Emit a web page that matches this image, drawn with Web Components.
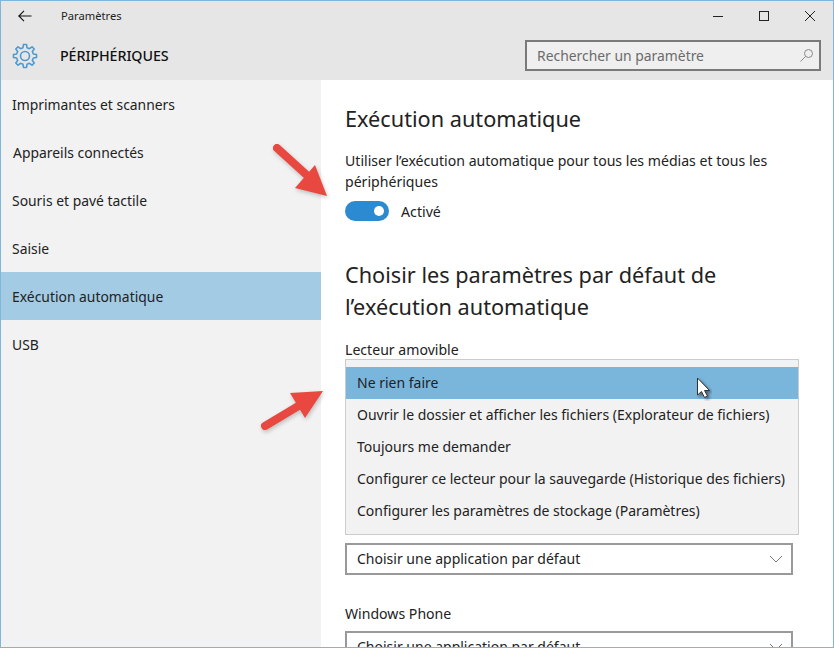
<!DOCTYPE html>
<html lang="fr"><head><meta charset="utf-8"><title>Paramètres</title>
<style>
html,body{margin:0;padding:0;background:#fff}
body{font-family:"Noto Sans","Open Sans","Liberation Sans",sans-serif;color:#1a1a1a}
</style></head><body>
<settings-window>
  <settings-header slot="header"></settings-header>
  <side-nav slot="nav">
    <nav-item>Imprimantes et scanners</nav-item>
    <nav-item style="--shift:1px">Appareils connectés</nav-item>
    <nav-item>Souris et pavé tactile</nav-item>
    <nav-item>Saisie</nav-item>
    <nav-item selected>Exécution automatique</nav-item>
    <nav-item>USB</nav-item>
  </side-nav>
  <autoplay-page slot="main"></autoplay-page>
  <red-arrow style="left:269px;top:139px" shaft="M7 8 40 38" head="M57 56 25 48 45 25Z"></red-arrow>
  <red-arrow style="left:259px;top:384px" shaft="M5 41 40 20" head="M63 6 30 8 45 33Z"></red-arrow>
</settings-window>
<script>
function def(name, html, init){
  customElements.define(name, class extends HTMLElement{
    constructor(){super();this.attachShadow({mode:'open'}).innerHTML=html;}
    connectedCallback(){ if(init) init.call(this); }
  });
}
function gearPath(cx,cy,ro,ri,n){
  let d='';
  const p=(r,a)=>(cx+r*Math.sin(a)).toFixed(2)+' '+(cy-r*Math.cos(a)).toFixed(2);
  const step=2*Math.PI/n;
  for(let i=0;i<n;i++){
    const a=i*step;
    d+=(i?'L':'M')+p(ri,a-step*.30)+'L'+p(ro,a-step*.17)+'L'+p(ro,a+step*.17)+'L'+p(ri,a+step*.30);
  }
  return d+'Z';
}
def('settings-window',`<style>
:host{display:grid;grid-template-columns:320px 1fr;grid-template-rows:79px 1fr;width:834px;height:648px;box-sizing:border-box;border:1px solid #7fb6dc;overflow:hidden;background:#fff;position:relative}
.h{grid-column:1/3;display:block}
</style><slot name="header" class="h"></slot><slot name="nav"></slot><slot name="main"></slot><slot></slot>`);

def('settings-header',`<style>
:host{display:block;grid-column:1/3;background:#e6e6e6;height:79px;color:#000}
.top{display:flex;align-items:center;height:30px}
.back{width:14px;height:12px;margin-left:17px;flex:none}
.app{margin-left:29px;font-size:11.2px;color:#222;flex:1;padding-bottom:2px}
.wb{display:flex;align-items:center;margin-right:0}
.wb span{display:flex;width:46px;justify-content:center;align-items:center;height:30px}
.row{display:flex;align-items:center;height:49px}
.gear{width:26px;height:26px;margin-left:11px;flex:none}
.title{margin-left:22px;font-size:14.3px;font-weight:500;color:#111;flex:1;letter-spacing:-.1px}
.search{width:277px;height:27px;border:2px solid #7a7a7a;background:#efefef;margin-right:12px;display:flex;align-items:center;justify-content:space-between;padding:0 5px 0 10px;font-size:13.9px;color:#6b6b6b}
</style>
<div class="top">
 <svg class="back" viewBox="0 0 14 12" fill="none" stroke="#111" stroke-width="1.100"><path d="M.8 6H13.500M6 .8.8 6 6 11.200"/></svg>
 <span class="app">Paramètres</span>
 <div class="wb">
  <span><svg width="12" height="12" fill="none" stroke="#222"><path d="M1 6.500H11"/></svg></span>
  <span><svg width="12" height="12" fill="none" stroke="#222"><rect x="1.500" y="1.500" width="9" height="9"/></svg></span>
  <span><svg width="12" height="12" fill="none" stroke="#222"><path d="M1 1l10 10M11 1 1 11"/></svg></span>
 </div>
</div>
<div class="row">
 <svg class="gear" viewBox="0 0 26 26" fill="none" stroke="#4d9ad0" stroke-width="1.600" stroke-linejoin="round">
  <path d="${gearPath(13,13,11.6,8.6,8)}"/>
  <circle cx="13" cy="13" r="4.500"/>
 </svg>
 <span class="title">PÉRIPHÉRIQUES</span>
 <div class="search"><span>Rechercher un paramètre</span>
  <svg width="15" height="15" viewBox="0 0 15 15" fill="none" stroke="#8a8a8a"><circle cx="9.500" cy="5.500" r="4"/><path d="M6.500 8.500 1.500 13.500"/></svg></div>
</div>`);

def('side-nav',`<style>:host{display:block;background:#f2f2f2;padding:0}</style><slot></slot>`);
def('nav-item',`<style>
:host{display:flex;align-items:center;height:48px;padding-left:calc(11px + var(--shift,0px));font-size:13.9px;color:#222}
:host([selected]){background:#a3cce4}
</style><slot></slot>`);

def('toggle-switch',`<style>
:host{display:flex;align-items:center;gap:12px;font-size:14.2px;color:#222}
.t{width:44px;height:20px;border-radius:10px;background:#2b8ad0;position:relative;flex:none}
.t i{position:absolute;right:5px;top:5px;width:10px;height:10px;border-radius:50%;background:#fff}
</style><span class="t"><i></i></span><slot></slot>`);

def('combo-box',`<style>
:host{display:flex;align-items:center;justify-content:space-between;box-sizing:border-box;width:448px;height:32px;border:2px solid #999;background:#fff;padding:0 8px 2px 10px;font-size:14px;color:#222;flex:none}
svg{margin-top:2px}
</style><slot></slot><svg width="14" height="8" fill="none" stroke="#777"><path d="M1 1l6 6 6-6"/></svg>`);

def('drop-list',`<style>
:host{display:block;box-sizing:border-box;width:454px;height:176px;border:1px solid #ccc;background:#f2f2f2;padding:7px 0;flex:none}
</style><slot></slot>`);
def('drop-option',`<style>
:host{display:flex;align-items:center;box-sizing:border-box;height:32px;padding:0 0 2px 11px;font-size:14px;color:#222;white-space:nowrap}
:host([selected]){background:#7ab5dc}
</style><slot></slot>`);

def('autoplay-page',`<style>
:host{display:flex;flex-direction:column;align-items:flex-start;padding:0 0 0 24px;color:#222;height:568px;overflow:hidden;position:relative;font-size:14.1px}
h2{font-weight:400;margin:0;font-size:21.7px;color:#222;line-height:32px}
.h1{margin-top:23px}
.desc{margin:16px 0 0;line-height:20.5px;width:450px}
toggle-switch{margin-top:9px}
.h2{margin-top:38px;width:450px}
.lab{margin-top:18px;line-height:18px}
combo-box{margin-top:8px}
.lab2{margin-top:30px}
.cur{position:absolute;left:375px;top:297px}
</style>
<h2 class="h1">Exécution automatique</h2>
<p class="desc">Utiliser l’exécution automatique pour tous les médias et tous les périphériques</p>
<toggle-switch>Activé</toggle-switch>
<h2 class="h2">Choisir les paramètres par défaut de l’exécution automatique</h2>
<div class="lab">Lecteur amovible</div>
<drop-list>
 <drop-option selected>Ne rien faire</drop-option>
 <drop-option>Ouvrir le dossier et afficher les fichiers (Explorateur de fichiers)</drop-option>
 <drop-option>Toujours me demander</drop-option>
 <drop-option>Configurer ce lecteur pour la sauvegarde (Historique des fichiers)</drop-option>
 <drop-option>Configurer les paramètres de stockage (Paramètres)</drop-option>
</drop-list>
<combo-box>Choisir une application par défaut</combo-box>
<div class="lab lab2">Windows Phone</div>
<combo-box>Choisir une application par défaut</combo-box>
<svg class="cur" width="16" height="24" viewBox="0 0 16 24"><path d="M1.500 1v17l4-3.500 3 6 3-1.500-3-5.500h5z" fill="#fff" stroke="#333" stroke-width="1" style="filter:drop-shadow(2px 2px 1.500px rgba(0,0,0,.45))"/></svg>
`);

def('red-arrow',`<style>:host{display:block;position:absolute;pointer-events:none;z-index:3}
svg{display:block;overflow:visible;filter:drop-shadow(1px 2px 2px rgba(0,0,0,.22))}</style>
<svg width="70" height="60"><path class="s" stroke="#e8483f" stroke-width="8" stroke-linecap="round" fill="none"/><path class="h" fill="#e8483f"/></svg>`,
function(){
  this.shadowRoot.querySelector('.s').setAttribute('d',this.getAttribute('shaft'));
  this.shadowRoot.querySelector('.h').setAttribute('d',this.getAttribute('head'));
});
</script>
</body></html>
